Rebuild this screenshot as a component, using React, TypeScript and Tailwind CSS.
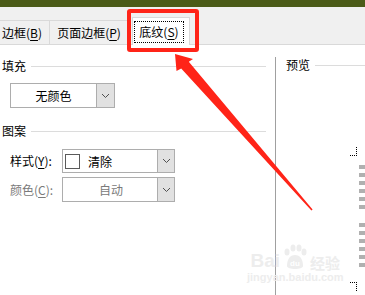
import React from "react";

const Chevron = ({ color = "#505050" }: { color?: string }) => (
  <svg width="9" height="6" viewBox="0 0 9 6">
    <polyline points="1,1 4.5,4.5 8,1" fill="none" stroke={color} strokeWidth="1" />
  </svg>
);

const U = ({ children }: { children: React.ReactNode }) => <span className="underline underline-offset-2">{children}</span>;

export default function App() {
  return (
    <div
      className="relative w-[365px] h-[295px] overflow-hidden bg-white text-[12px] leading-[16px] text-black"
      style={{ fontFamily: '"Noto Sans CJK SC", "Noto Sans", sans-serif' }}
    >
      {/* top olive bar */}
      <div className="h-[7px] bg-[#4b5b18]" />
      {/* tab strip */}
      <div className="h-[38px] bg-[#f0f0f0] border-b border-[#d9d9d9] flex items-end">
        <div className="w-[50px] h-[24px] border-t border-r border-[#d9d9d9] flex items-center pl-[2px] whitespace-nowrap">
          边框(<U>B</U>)
        </div>
        <div className="w-[79px] h-[24px] border-t border-r border-[#d9d9d9] flex items-center justify-center whitespace-nowrap">
          页面边框(<U>P</U>)
        </div>
        <div className="ml-[3px] w-[58px] h-[28px] -mb-px bg-white border-t border-l border-r border-[#d9d9d9] pt-[3px] pl-[1px]">
          <div className="w-[50px] h-[22px] border border-dotted border-black flex items-center justify-center whitespace-nowrap">
            底纹(<U>S</U>)
          </div>
        </div>
      </div>

      {/* content */}
      <div className="flex h-[250px]">
        <div className="w-[275px] pl-[2px] pr-[9px]">
          <div className="mt-[13px] h-[16px] flex items-center">
            <span>填充</span>
            <div className="ml-[5px] flex-1 h-px bg-[#dcdcdc]" />
          </div>
          <div className="mt-[9px] ml-[8px] w-[105px] h-[25px] border border-[#adadad] flex">
            <div className="flex-1 flex items-center justify-center">无颜色</div>
            <div className="w-[18px] bg-[#e1e1e1] border-l border-[#adadad] flex items-center justify-center">
              <Chevron />
            </div>
          </div>
          <div className="mt-[15px] h-[16px] flex items-center">
            <span>图案</span>
            <div className="ml-[5px] flex-1 h-px bg-[#dcdcdc]" />
          </div>
          <div className="mt-[10px] ml-[8px] flex items-center">
            <div className="w-[52px] whitespace-nowrap">
              样式(<U>Y</U>):
            </div>
            <div className="w-[113px] h-[24px] border border-[#adadad] flex">
              <div className="flex-1 flex items-center pl-[2px]">
                <div className="w-[15px] h-[15px] border border-[#5a5a5a] bg-white" />
                <span className="ml-[8px] mt-[2px]">清除</span>
              </div>
              <div className="w-[17px] bg-[#e1e1e1] border-l border-[#adadad] flex items-center justify-center">
                <Chevron />
              </div>
            </div>
          </div>
          <div className="mt-[4px] ml-[8px] flex items-center text-[#7a7a7a]">
            <div className="w-[52px] whitespace-nowrap">
              颜色(<U>C</U>):
            </div>
            <div className="w-[113px] h-[25px] border border-[#adadad] flex">
              <div className="flex-1 flex items-center justify-center pl-[2px]">自动</div>
              <div className="w-[17px] bg-[#e1e1e1] border-l border-[#adadad] flex items-center justify-center">
                <Chevron />
              </div>
            </div>
          </div>
        </div>

        {/* preview */}
        <div className="flex-1 mt-[12px] border-l border-[#a0a0a0] flex flex-col">
          <div className="h-[16px] flex items-center pl-[10px]">
            <span>预览</span>
            <div className="ml-[5px] flex-1 h-px bg-[#dcdcdc]" />
          </div>
          <div className="mt-[74px] flex justify-end gap-[2px]">
            <div className="w-[7px] flex flex-col">
              <div className="h-[9px] border-r border-b border-dotted border-black" />
              <div className="mt-[126px] h-[9px] border-r border-t border-dotted border-black" />
            </div>
            <div className="w-[6px] pt-[18px] flex flex-col">
              <div className="flex flex-col gap-[4px]">
                <div className="h-[4px] bg-[#b0b0b0]" />
                <div className="h-[4px] bg-[#b0b0b0]" />
                <div className="h-[4px] bg-[#b0b0b0]" />
                <div className="h-[4px] bg-[#b0b0b0]" />
                <div className="h-[4px] bg-[#b0b0b0]" />
                <div className="h-[4px] bg-[#b0b0b0]" />
              </div>
              <div className="mt-[14px] flex flex-col gap-[4px]">
                <div className="h-[4px] bg-[#b0b0b0]" />
                <div className="h-[4px] bg-[#b0b0b0]" />
                <div className="h-[4px] bg-[#b0b0b0]" />
                <div className="h-[4px] bg-[#b0b0b0]" />
                <div className="h-[4px] bg-[#b0b0b0]" />
                <div className="h-[4px] bg-[#b0b0b0]" />
              </div>
            </div>
          </div>
        </div>
      </div>

      {/* watermark */}
      <div
        className="absolute left-[247px] top-[244px] flex flex-col items-center text-[#ededed] pointer-events-none"
        style={{ fontFamily: '"Liberation Sans", "Noto Sans CJK SC", sans-serif' }}
      >
        <div className="flex items-end leading-none">
          <span className="text-[19px] font-bold">Bai</span>
          <svg width="28" height="26" viewBox="0 0 28 26" className="mx-[1px]">
            <ellipse cx="6" cy="8" rx="2.5" ry="3.5" fill="#ededed" />
            <ellipse cx="12" cy="4" rx="2.5" ry="3.5" fill="#ededed" />
            <ellipse cx="18" cy="4" rx="2.5" ry="3.5" fill="#ededed" />
            <ellipse cx="23" cy="8" rx="2.5" ry="3.5" fill="#ededed" />
            <path d="M6 22 C6 14 10 11 14 11 C18 11 22 14 22 22 C22 26 6 26 6 22 Z" fill="#ededed" />
            <text x="14" y="22" textAnchor="middle" fontSize="8" fontWeight="bold" fill="#ffffff" fontFamily="Liberation Sans">du</text>
          </svg>
          <span className="text-[15px] font-bold" style={{ fontFamily: '"Noto Sans CJK SC", sans-serif' }}>经验</span>
        </div>
        <span className="text-[11px] font-bold leading-[13px] mt-[1px]">jingyan.baidu.com</span>
      </div>

      {/* red highlight box */}
      <div className="absolute left-[127px] top-[9px] w-[72px] h-[43px] border-[4px] border-[#ff2418] rounded-[3px]" />

      {/* red arrow */}
      <svg className="absolute left-0 top-0 pointer-events-none" width="365" height="295" viewBox="0 0 365 295">
        <polygon
          points="175,54 193,59 188.8,61.8 312.6,209.4 311.4,210.6 181.2,68.4 176.5,71"
          fill="#ff2418"
        />
      </svg>
    </div>
  );
}
